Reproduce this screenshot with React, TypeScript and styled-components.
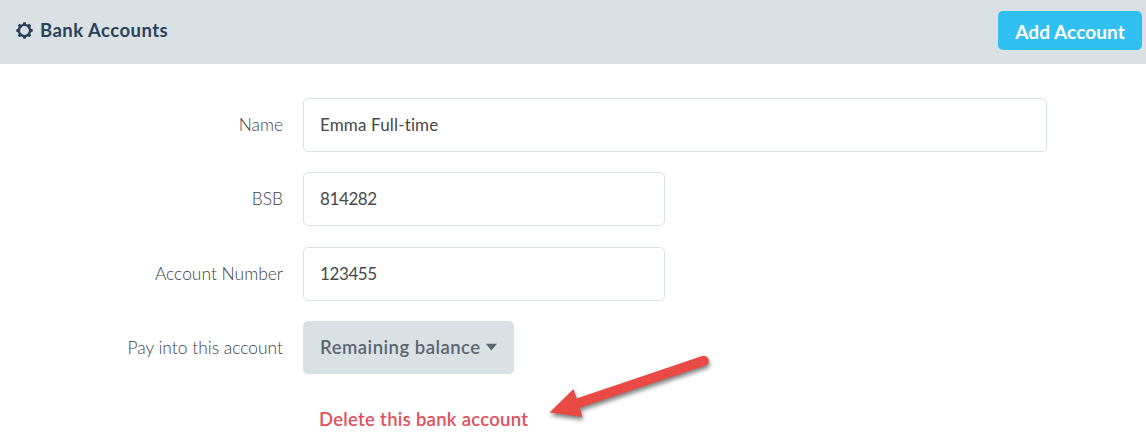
import React from "react";
import styled, { createGlobalStyle } from "styled-components";

const GlobalStyle = createGlobalStyle`
  body {
    margin: 0;
    background: #fff;
    font-family: Lato, "Liberation Sans", sans-serif;
    font-size: 18px;
    font-variant-ligatures: none;
  }
`;

const Page = styled.div`
  position: relative;
  width: 1146px;
  height: 446px;
  overflow: hidden;
`;

const Header = styled.header`
  display: flex;
  justify-content: space-between;
  align-items: flex-start;
  box-sizing: border-box;
  height: 64px;
  padding: 11px 4px 0 16px;
  background: #dae1e4;
`;

const Title = styled.h1`
  display: flex;
  align-items: center;
  gap: 7px;
  height: 38px;
  margin: 0;
  font-size: 18.5px;
  font-weight: 700;
  letter-spacing: 0.46px;
  color: #2b4159;
  white-space: nowrap;
`;

const AddButton = styled.button`
  width: 144px;
  height: 39px;
  padding: 2px 0 0;
  border: 0;
  border-radius: 5px;
  background: #30bff1;
  color: #fff;
  font: 700 19px Lato, "Liberation Sans", sans-serif;
  letter-spacing: 0.08px;
  white-space: nowrap;
`;

const Form = styled.form`
  display: flex;
  flex-direction: column;
  padding-top: 34px;
`;

const Row = styled.div<{ $gap?: number }>`
  display: flex;
  align-items: center;
  height: 54px;
  margin-bottom: ${(p) => p.$gap ?? 20}px;
`;

const Label = styled.label`
  width: 283px;
  margin-right: 20px;
  padding-bottom: 1px;
  text-align: right;
  font-size: 17.4px;
  font-weight: 300;
  color: #3c4148;
  letter-spacing: 0.01px;
  white-space: nowrap;
`;

const Input = styled.input<{ $width: number; $spacing: number }>`
  box-sizing: border-box;
  width: ${(p) => p.$width}px;
  height: 54px;
  padding: 0 16px 1px;
  border: 1px solid #dae1e4;
  border-radius: 5px;
  outline: 0;
  background: #fff;
  color: #47484a;
  font: 400 17px Lato, "Liberation Sans", sans-serif;
  letter-spacing: ${(p) => p.$spacing}px;
`;

const Select = styled.button`
  display: flex;
  align-items: center;
  gap: 4px;
  align-self: flex-start;
  width: 211px;
  height: 53px;
  padding: 0 0 1px 17px;
  border: 0;
  border-radius: 5px;
  background: #dae1e4;
  color: #5a656e;
  font: 600 18.5px Lato, "Liberation Sans", sans-serif;
  letter-spacing: 0.49px;
  white-space: nowrap;
`;

const DeleteLink = styled.a`
  align-self: flex-start;
  margin: 13px 0 0 319px;
  line-height: 22px;
  font-size: 18.5px;
  font-weight: 600;
  letter-spacing: 0.28px;
  color: #e2505c;
  white-space: nowrap;
`;

const Pointer = styled.svg`
  position: absolute;
  left: 530px;
  top: 340px;
  filter: drop-shadow(1px 3px 2px rgba(0, 0, 0, 0.5));
`;

const teeth = [0, 45, 90, 135, 180, 225, 270, 315];

const Gear = () => (
  <svg width="17" height="17" viewBox="0 0 17 17">
    <circle cx="8.5" cy="8.5" r="5.6" fill="none" stroke="#2b4159" strokeWidth="2.4" />
    {teeth.map((a) => (
      <path key={a} d="M6.5 2.9 L7.3 0.3 H9.7 L10.5 2.9 Z" fill="#2b4159" transform={`rotate(${a} 8.5 8.5)`} />
    ))}
  </svg>
);

export default function App() {
  return (
    <Page>
      <GlobalStyle />
      <Header>
        <Title>
          <Gear />
          Bank Accounts
        </Title>
        <AddButton type="button">Add Account</AddButton>
      </Header>
      <Form>
        <Row>
          <Label>Name</Label>
          <Input $width={744} $spacing={0.15} defaultValue="Emma Full-time" />
        </Row>
        <Row $gap={21}>
          <Label>BSB</Label>
          <Input $width={362} $spacing={-0.4} defaultValue="814282" />
        </Row>
        <Row>
          <Label>Account Number</Label>
          <Input $width={362} $spacing={-0.4} defaultValue="123455" />
        </Row>
        <Row>
          <Label>Pay into this account</Label>
          <Select type="button">
            Remaining balance
            <svg width="13" height="8" viewBox="0 0 13 8">
              <path d="M0.8 0.8 H12 L6.4 7.5 Z" fill="#5a656e" />
            </svg>
          </Select>
        </Row>
        <DeleteLink>Delete this bank account</DeleteLink>
      </Form>
      <Pointer width="200" height="106" viewBox="0 0 200 106">
        <path
          d="M19.5 72.5 L43.5 49 L46.5 58.6 L172.2 16 A5 5 0 0 1 175.4 25.5 L49.7 67.8 L52.5 77 Z"
          fill="#e94b44"
        />
      </Pointer>
    </Page>
  );
}
